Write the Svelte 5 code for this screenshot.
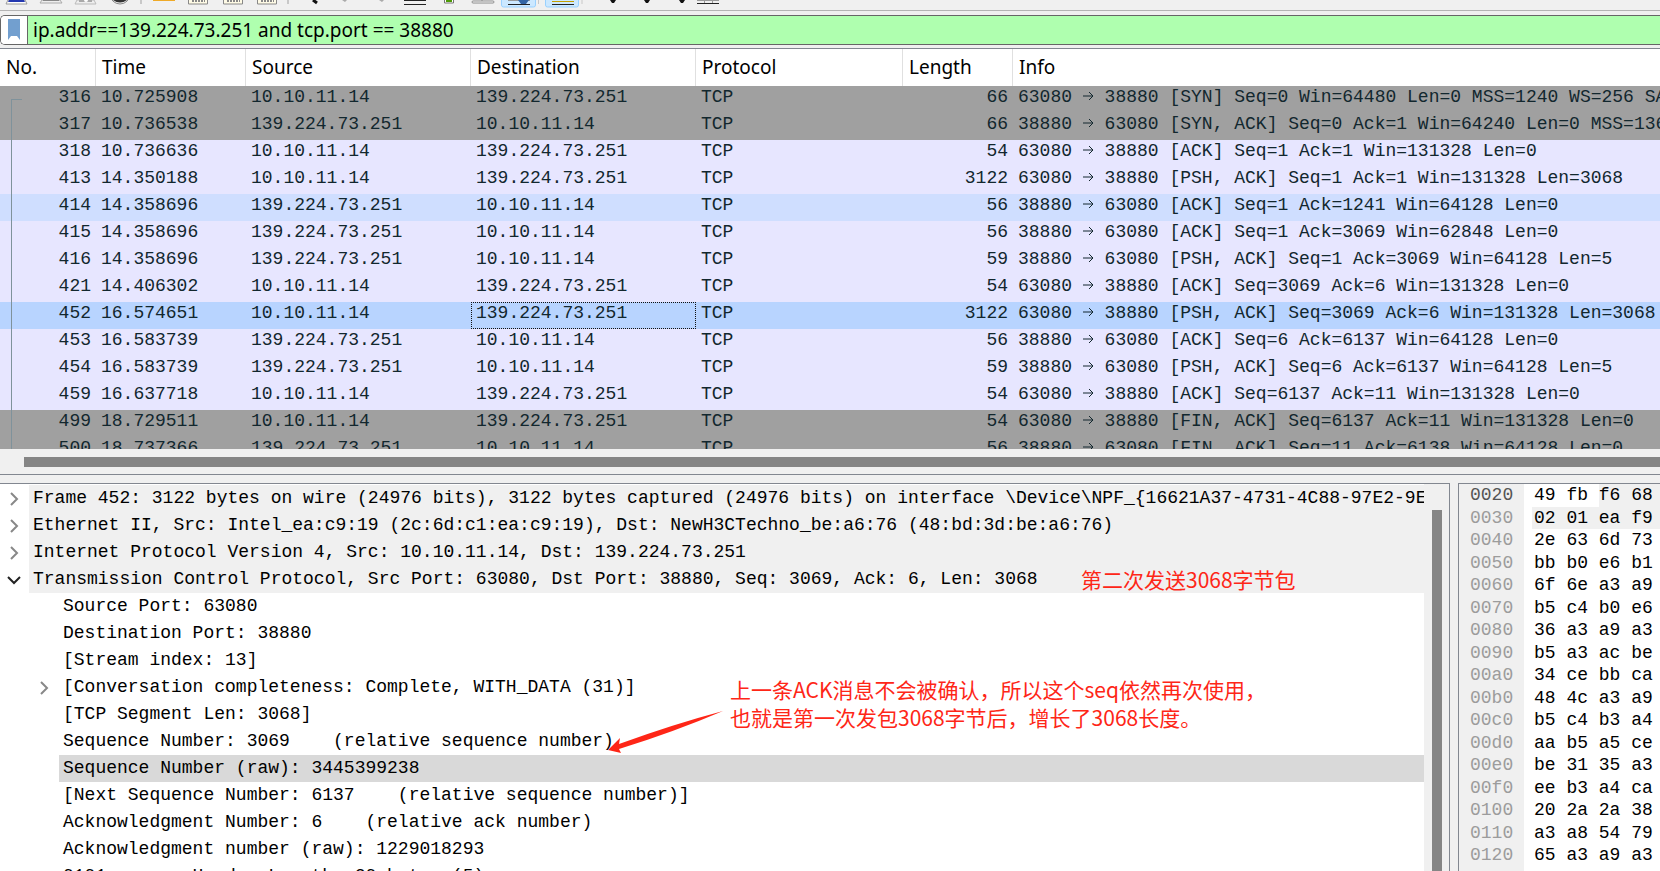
<script>
  const packets = [
    [316, '10.725908', 0, 66, '[SYN] Seq=0 Win=64480 Len=0 MSS=1240 WS=256 SACK_PERM', 'gray'],
    [317, '10.736538', 1, 66, '[SYN, ACK] Seq=0 Ack=1 Win=64240 Len=0 MSS=1360 SACK_PERM', 'gray'],
    [318, '10.736636', 0, 54, '[ACK] Seq=1 Ack=1 Win=131328 Len=0', ''],
    [413, '14.350188', 0, 3122, '[PSH, ACK] Seq=1 Ack=1 Win=131328 Len=3068', ''],
    [414, '14.358696', 1, 56, '[ACK] Seq=1 Ack=1241 Win=64128 Len=0', 'hover'],
    [415, '14.358696', 1, 56, '[ACK] Seq=1 Ack=3069 Win=62848 Len=0', ''],
    [416, '14.358696', 1, 59, '[PSH, ACK] Seq=1 Ack=3069 Win=64128 Len=5', ''],
    [421, '14.406302', 0, 54, '[ACK] Seq=3069 Ack=6 Win=131328 Len=0', ''],
    [452, '16.574651', 0, 3122, '[PSH, ACK] Seq=3069 Ack=6 Win=131328 Len=3068', 'selected'],
    [453, '16.583739', 1, 56, '[ACK] Seq=6 Ack=6137 Win=64128 Len=0', ''],
    [454, '16.583739', 1, 59, '[PSH, ACK] Seq=6 Ack=6137 Win=64128 Len=5', ''],
    [459, '16.637718', 0, 54, '[ACK] Seq=6137 Ack=11 Win=131328 Len=0', ''],
    [499, '18.729511', 0, 54, '[FIN, ACK] Seq=6137 Ack=11 Win=131328 Len=0', 'gray'],
    [500, '18.737366', 1, 56, '[FIN, ACK] Seq=11 Ack=6138 Win=64128 Len=0', 'gray'],
  ];
  const hosts = ['10.10.11.14', '139.224.73.251'];
  const ports = ['63080', '38880'];

  const layers = [
    ['Frame 452: 3122 bytes on wire (24976 bits), 3122 bytes captured (24976 bits) on interface \\Device\\NPF_{16621A37-4731-4C88-97E2-9EA', false],
    ['Ethernet II, Src: Intel_ea:c9:19 (2c:6d:c1:ea:c9:19), Dst: NewH3CTechno_be:a6:76 (48:bd:3d:be:a6:76)', false],
    ['Internet Protocol Version 4, Src: 10.10.11.14, Dst: 139.224.73.251', false],
    ['Transmission Control Protocol, Src Port: 63080, Dst Port: 38880, Seq: 3069, Ack: 6, Len: 3068', true],
  ];
  const fields = [
    'Source Port: 63080',
    'Destination Port: 38880',
    '[Stream index: 13]',
    '[Conversation completeness: Complete, WITH_DATA (31)]',
    '[TCP Segment Len: 3068]',
    'Sequence Number: 3069    (relative sequence number)',
    'Sequence Number (raw): 3445399238',
    '[Next Sequence Number: 6137    (relative sequence number)]',
    'Acknowledgment Number: 6    (relative ack number)',
    'Acknowledgment number (raw): 1229018293',
    '0101 .... = Header Length: 20 bytes (5)',
  ];
  const hex = [
    ['0020', '49 fb ', 'f6 68'], ['0030', '', '02 01 ea f9'], ['0040', '2e 63 6d 73'],
    ['0050', 'bb b0 e6 b1'], ['0060', '6f 6e a3 a9'], ['0070', 'b5 c4 b0 e6'],
    ['0080', '36 a3 a9 a3'], ['0090', 'b5 a3 ac be'], ['00a0', '34 ce bb ca'],
    ['00b0', '48 4c a3 a9'], ['00c0', 'b5 c4 b3 a4'], ['00d0', 'aa b5 a5 ce'],
    ['00e0', 'be 31 35 a3'], ['00f0', 'ee b3 a4 ca'], ['0100', '20 2a 2a 38'],
    ['0110', 'a3 a8 54 79'], ['0120', '65 a3 a9 a3'],
  ];
  let filter = $state('ip.addr==139.224.73.251 and tcp.port == 38880');
</script>

<main>
  <div class="toolbar">
    <svg width="760" height="10" viewBox="0 0 760 10" aria-hidden="true">
      <path d="M8 0h17l2 4H6z" fill="#fff" stroke="#999" /><path d="M9 0h15l1 2H8z" fill="#2438b0" />
      <path d="M42 0h18l2 3H40z" fill="#eee" stroke="#aaa" /><path d="M43 0h16v1H43z" fill="#888" />
      <path d="M77 0h17l2 4H75z" fill="#eee" stroke="#bbb" /><path d="M79 0h13v2H79z" fill="#aaa" /><circle cx="86" cy="0" r="2" fill="#fff" />
      <circle cx="120" cy="-6" r="10" fill="#eee" stroke="#888" /><path d="M113 0q7 5 14 0z" fill="#333" />
      <path d="M141 0v4M288 0v4" stroke="#c8c8c8" stroke-width="2" />
      <path d="M153 0h22v1H153z" fill="#efaa28" />
      <g fill="#fffbe6" stroke="#888"><path d="M188.500 -3h19v7h-19z" /><path d="M223.500 -3h19v7h-19z" /><path d="M257.500 -3h19v7h-19z" /></g>
      <path d="M192 1h13M227 1h13M261 1h13" stroke="#888" stroke-width="2" stroke-dasharray="2 1" />
      <path d="M313 0l4 3" stroke="#111" stroke-width="3" />
      <path d="M342 0h5l-2 2zM379 0h5l-2 2z" fill="#aaa" />
      <path d="M404 .500h22M404 4.500h22" stroke="#222" />
      <path d="M444.500 -2h9v5h-9z" fill="#fff" stroke="#777" /><path d="M446 0h6v2h-6z" fill="#4e9a06" />
      <rect x="472" y="1" width="22" height="2" rx="1" fill="#fff" stroke="#888" /><path d="M482 0v1" stroke="#888" />
      <g fill="#cce8ff" stroke="#99d1ff"><rect x="501.500" y="-6" width="34" height="13" rx="2" /><rect x="545.500" y="-6" width="33" height="13" rx="2" /></g>
      <path d="M508 .500h22" stroke="#999" /><path d="M508 4.500h22M552 4.500h22" stroke="#222" /><path d="M518 0h11l-3 4h-5z" fill="#3465a4" /><path d="M552 1.500h22" stroke="#c4a000" />
      <path d="M538.500 0v4M582 0v4" stroke="#c8c8c8" />
      <path d="M610 0h6l-2 3h-2zM644 0h6l-2 3h-2zM679 0h6l-2 3h-2z" fill="#111" />
      <path d="M697 3.500h22" stroke="#222" /><path d="M697 .500h22M704.500 0v3M712.500 0v3" stroke="#999" />
    </svg>
  </div>

  <div class="filter">
    <button aria-label="Display filter bookmarks">
      <svg width="14" height="22" viewBox="0 0 14 22"><path d="M1 0h12v21l-3-4H4l-3 4z" fill="#729fcf" /></svg>
    </button>
    <input aria-label="Display filter" spellcheck="false" bind:value={filter} />
  </div>

  <section class="packets">
    <table>
      <colgroup>
        <col class="c-no" /><col class="c-time" /><col class="c-addr" /><col class="c-addr" /><col class="c-proto" /><col class="c-len" /><col />
      </colgroup>
      <thead>
        <tr><th>No.</th><th>Time</th><th>Source</th><th>Destination</th><th>Protocol</th><th>Length</th><th>Info</th></tr>
      </thead>
      <tbody>
        {#each packets as [no, time, dir, length, info, tone], i}
          <tr class={tone}>
            <td class="num" class:first={i === 0} class:linked={i > 0}>{no}</td>
            <td>{time}</td>
            <td>{hosts[dir]}</td>
            <td class:focus={tone === 'selected'}>{hosts[1 - dir]}</td>
            <td>TCP</td>
            <td class="num">{length}</td>
            <td>{ports[dir]}&nbsp;<svg class="to" viewBox="0 0 11 12" aria-label="to"><path d="M0 6h10M6 2l4 4-4 4" /></svg>&nbsp;{ports[1 - dir]} {info}</td>
          </tr>
        {/each}
      </tbody>
    </table>
  </section>
  <div class="hscroll"><div></div></div>

  <div class="panes">
    <section class="details">
      <div class="tree">
        {#each layers as [text, open]}
          <div class="row">
            <svg class="chev" class:open viewBox="0 0 14 14" aria-hidden="true"><path d={open ? 'M1 4l6 6 6-6' : 'M4 1l6 6-6 6'} /></svg>
            <span class="label layer">{text}</span>
          </div>
        {/each}
        {#each fields as text, i}
          <div class="row child">
            {#if i === 3}<svg class="chev" viewBox="0 0 14 14" aria-hidden="true"><path d="M4 1l6 6-6 6" /></svg>{/if}
            <span class="label" class:current={i === 6}>{text}</span>
          </div>
        {/each}
      </div>
      <div class="vscroll"><div></div></div>
      <p class="note one">第二次发送3068字节包</p>
      <p class="note two">上一条ACK消息不会被确认，所以这个seq依然再次使用，<br />也就是第一次发包3068字节后，增长了3068长度。</p>
      <svg class="arrow" width="118" height="46" viewBox="0 0 118 46" aria-hidden="true">
        <path d="M115 1Q66 14 11 34L12 28 0 40l13 3-2-4Q66 22 115 1z" fill="#fe2617" />
      </svg>
    </section>
    <section class="bytes">
      {#each hex as [offset, lead, rest], i}
        <div class="line">
          <span class="offset" class:on={i === 0}>{offset}</span>
          <span class="data">{lead}{#if rest}<mark class:whole={!lead}>{rest}</mark>{/if}</span>
        </div>
      {/each}
    </section>
  </div>
</main>

<style>
  :global(body) { margin: 0; background: #f0f0f0; }
  main {
    display: flex; flex-direction: column; height: 100vh; overflow: hidden;
    color: #000; background: #f0f0f0;
    font: 18px/27px "Liberation Mono", monospace;
  }
  svg { display: block; flex: none; }
  .toolbar { flex: none; height: 10px; border-bottom: 1px solid #b4b4b4; }
  .filter {
    display: flex; flex: none; height: 28px; margin: 4px 0 3px;
    border: solid #666; border-width: 1px 0 1px 1px; border-radius: 5px 0 0 5px;
    background: #fff; overflow: hidden;
  }
  .filter button { width: 27px; padding: 0 6px; border: 0; border-right: 1px solid #666; background: #fff; }
  .filter input {
    flex: 1; min-width: 0; padding: 0 5px; border: 0; outline: 0;
    background: #afffaf; color: #000; font: 19px "Noto Sans", sans-serif;
  }
  .packets { flex: none; height: 400px; border-top: 1px solid #828790; background: #fff; overflow: hidden; }
  table { width: 100%; table-layout: fixed; border-collapse: separate; border-spacing: 0; }
  .c-no { width: 96px; }
  .c-time { width: 150px; }
  .c-addr { width: 225px; }
  .c-proto { width: 207px; }
  .c-len { width: 110px; }
  th {
    height: 37px; padding: 0 6px; border-right: 1px solid #e0e0e0; text-align: left;
    font: 19px/37px "Noto Sans", sans-serif;
  }
  th:last-child { border-right: 0; }
  td { height: 27px; padding: 0 5px; color: #12272e; white-space: pre; overflow: hidden; line-height: 22px; vertical-align: top; box-sizing: border-box; }
  .num { text-align: right; }
  tbody tr { background: #e7e6ff; }
  tbody .gray { background: #a0a0a0; }
  tbody .hover { background: #cfdeff; }
  tbody .selected { background: #b8d4ff; }
  .linked { background: linear-gradient(#7f929b, #7f929b) 11px 0 / 1px 100% no-repeat; }
  .first {
    background:
      linear-gradient(#7f929b, #7f929b) 11px 13px / 1px 14px no-repeat,
      linear-gradient(#7f929b, #7f929b) 11px 13px / 11px 1px no-repeat;
  }
  .focus { outline: 1px dotted #111; outline-offset: -1px; }
  .to { display: inline-block; width: 11px; height: 12px; fill: none; stroke: #12272e; }
  .hscroll { flex: none; height: 17px; padding: 8px 0 0 24px; border-bottom: 1px solid #828790; }
  .hscroll div { height: 10px; background: #858585; }
  .panes { flex: 1; display: flex; gap: 8px; min-height: 0; padding-top: 8px; }
  .details {
    position: relative; flex: 1; min-width: 0; display: flex;
    border: solid #828790; border-width: 1px 1px 0 0; overflow: hidden;
  }
  .hscroll { box-sizing: content-box; }
  .tree { flex: 1; min-width: 0; background: #fff; overflow: hidden; padding-top: 1px; }
  .row { display: flex; align-items: center; height: 27px; padding-left: 7px; }
  .row.child { padding-left: 37px; }
  .chev { width: 14px; height: 14px; fill: none; stroke: #888; stroke-width: 2; }
  .chev.open { stroke: #222; }
  .label { flex: 1; min-width: 0; height: 27px; margin-left: 8px; padding-left: 4px; white-space: pre; overflow: hidden; }
  .child .label:first-child { margin-left: 22px; }
  .layer { background: #f0f0f0; }
  .current { background: #d9d9d9; }
  .vscroll { flex: none; width: 25px; padding: 26px 7px 0 8px; box-sizing: border-box; display: flex; }
  .vscroll div { flex: 1; background: #858585; }
  .note { position: absolute; margin: 0; color: #fe2617; white-space: nowrap; font: 21px/28px "Noto Sans CJK SC", sans-serif; }
  .one { left: 1081px; top: 81px; }
  .two { left: 730px; top: 191px; }
  .arrow { position: absolute; left: 608px; top: 226px; }
  .bytes {
    flex: none; width: 201px; display: grid; grid-template-rows: repeat(9, 23px 22px);
    border: solid #828790; border-width: 1px 0 0 1px;
    background: linear-gradient(90deg, #f0f0f0 65px, #fff 65px); overflow: hidden;
  }
  .line { display: flex; line-height: 23px; }
  .offset { width: 54px; padding-left: 11px; color: #9c9c9c; }
  .offset.on { color: #555; }
  .data { flex: 1; display: flex; padding-left: 10px; white-space: pre; }
  mark { flex: 1; background: #f0f0f0; color: inherit; }
  .whole { margin-left: -2px; padding-left: 2px; }
</style>
